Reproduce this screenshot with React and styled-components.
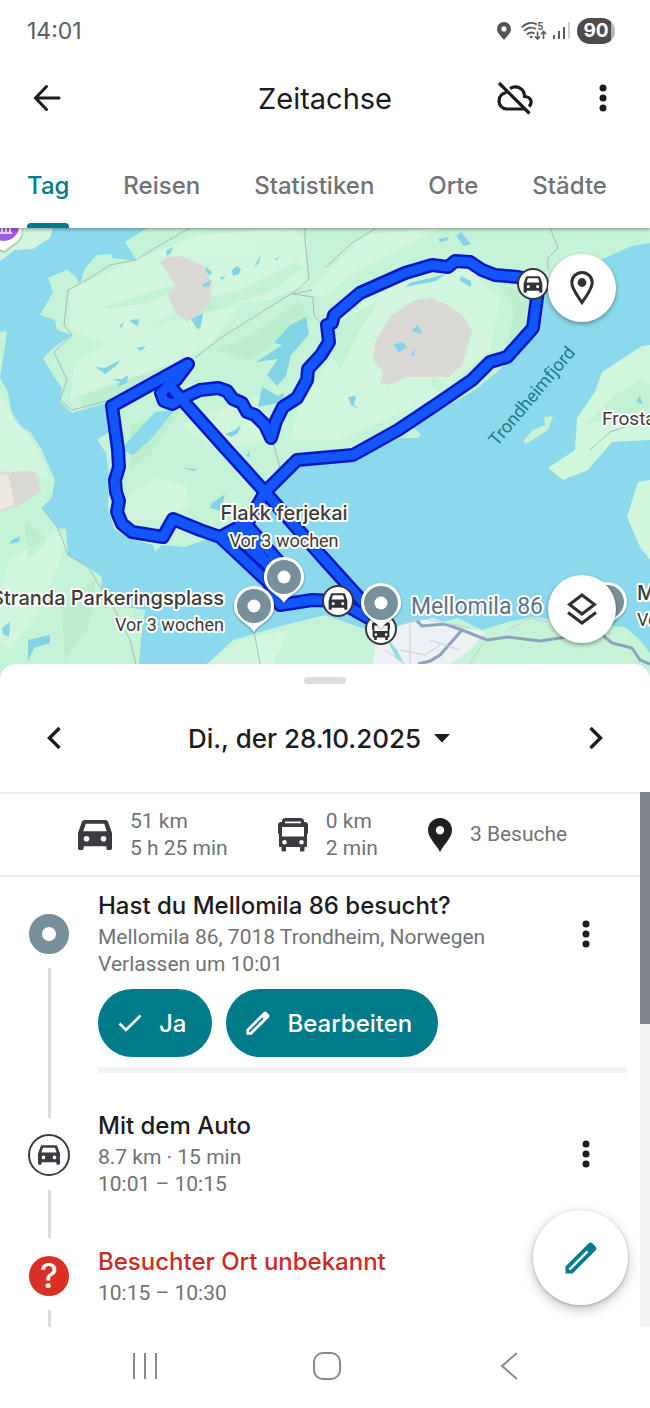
import styled, { createGlobalStyle } from 'styled-components'

const TEAL = '#007b8a'
const INK = '#1c1c1f'
const GREY = '#6f7377'
const TITLE_FONT = `Inter, 'Google Sans', sans-serif`

export default function App() {
  return (
    <>
      <GlobalStyle />
      <Screen>
        <TopArea>
          <StatusBar>
            <Clock>14:01</Clock>
            <StatusIcons>
              <LocationIcon />
              <WifiIcon />
              <SignalIcon />
              <Battery>90</Battery>
            </StatusIcons>
          </StatusBar>

          <AppBar>
            <IconButton aria-label="Zurück">
              <svg width="28" height="28" viewBox="0 0 28 28" fill="none" stroke={INK} strokeWidth="3" strokeLinecap="round">
                <path d="M26 14H3M13.500 2.500L2.500 14L13.500 25.500" />
              </svg>
            </IconButton>
            <PageTitle>Zeitachse</PageTitle>
            <BarActions>
              <IconButton aria-label="Sicherung aus">
                <CloudOffIcon />
              </IconButton>
              <IconButton aria-label="Mehr">
                <DotsIcon />
              </IconButton>
            </BarActions>
          </AppBar>

          <Tabs>
            {TABS.map((tab, i) => (
              <Tab key={tab} href="#" $active={i === 0}>
                {tab}
              </Tab>
            ))}
          </Tabs>
        </TopArea>

        <MapArea>
          <TimelineMap />
          <MapButton $top aria-label="Orte anzeigen">
            <svg width="26" height="36" viewBox="0 0 26 36" fill="none">
              <path
                d="M13 32.500C9 26 2.800 19.500 2.800 12.600a10.200 10.200 0 0 1 20.400 0C23.200 19.500 17 26 13 32.500z"
                stroke="#2f3034"
                strokeWidth="3"
              />
              <circle cx="13" cy="12.500" r="4.400" fill="#2f3034" />
            </svg>
          </MapButton>
          <MapButton aria-label="Ebenen">
            <svg width="32" height="34" viewBox="0 0 32 34" fill="none" stroke="#2f3034" strokeWidth="3">
              <path d="M16 3L28.500 12.500L16 22L3.500 12.500z" />
              <path d="M2 20.500L16 31L30 20.500" />
            </svg>
          </MapButton>
        </MapArea>

        <Sheet>
          <Handle />
          <DateRow>
            <IconButton aria-label="Vorheriger Tag">
              <svg width="16" height="24" viewBox="0 0 16 24" fill="none" stroke={INK} strokeWidth="3.400">
                <path d="M13.500 2L3.500 12L13.500 22" />
              </svg>
            </IconButton>
            <DateButton>
              Di., der 28.10.2025
              <svg width="16" height="9" viewBox="0 0 16 9">
                <path d="M0 0h16L8 8.500z" fill={INK} />
              </svg>
            </DateButton>
            <IconButton aria-label="Nächster Tag">
              <svg width="16" height="24" viewBox="0 0 16 24" fill="none" stroke={INK} strokeWidth="3.400">
                <path d="M2.500 2L12.500 12L2.500 22" />
              </svg>
            </IconButton>
          </DateRow>

          <SheetBody>
            <Content>
              <Stats>
                <Stat>
                  <CarIcon size={34} />
                  <StatText>
                    51 km
                    <br />5 h 25 min
                  </StatText>
                </Stat>
                <Stat>
                  <BusIcon />
                  <StatText>
                    0 km
                    <br />2 min
                  </StatText>
                </Stat>
                <Stat>
                  <svg width="24" height="34" viewBox="0 0 24 34">
                    <path
                      fillRule="evenodd"
                      d="M12 0a12 12 0 0 1 12 12C24 20 16 26 12 34C8 26 0 20 0 12A12 12 0 0 1 12 0zM12 8a4.200 4.200 0 1 0 0 8.400a4.200 4.200 0 0 0 0-8.400z"
                      fill="#1f1f22"
                    />
                  </svg>
                  <StatText>3 Besuche</StatText>
                </Stat>
              </Stats>

              <Timeline>
                <Entry>
                  <Rail>
                    <PlaceDot />
                    <RailLine />
                  </Rail>
                  <EntryBody>
                    <EntryHead>
                      <EntryText>
                        <EntryTitle>Hast du Mellomila 86 besucht?</EntryTitle>
                        <EntryInfo>Mellomila 86, 7018 Trondheim, Norwegen</EntryInfo>
                        <EntryInfo>Verlassen um 10:01</EntryInfo>
                      </EntryText>
                      <IconButton aria-label="Optionen">
                        <DotsIcon />
                      </IconButton>
                    </EntryHead>
                    <Actions>
                      <PillButton>
                        <svg width="24" height="20" viewBox="0 0 24 20" fill="none" stroke="#fff" strokeWidth="2.600">
                          <path d="M1.500 10.500L8 17L22.500 2.500" />
                        </svg>
                        Ja
                      </PillButton>
                      <PillButton>
                        <PencilIcon size={24} color="#fff" />
                        Bearbeiten
                      </PillButton>
                    </Actions>
                    <EntryDivider />
                  </EntryBody>
                </Entry>

                <Entry>
                  <Rail>
                    <RideDot>
                      <CarIcon size={22} />
                    </RideDot>
                    <RailLine $short />
                  </Rail>
                  <EntryBody>
                    <EntryHead $spaced>
                      <EntryText>
                        <EntryTitle>Mit dem Auto</EntryTitle>
                        <EntryInfo>8.7 km · 15 min</EntryInfo>
                        <EntryInfo>10:01 – 10:15</EntryInfo>
                      </EntryText>
                      <IconButton aria-label="Optionen">
                        <DotsIcon />
                      </IconButton>
                    </EntryHead>
                  </EntryBody>
                </Entry>

                <Entry $last>
                  <Rail $compact>
                    <UnknownDot>?</UnknownDot>
                    <RailLine $last />
                  </Rail>
                  <EntryBody>
                    <EntryText>
                      <EntryTitle $warn>Besuchter Ort unbekannt</EntryTitle>
                      <EntryInfo>10:15 – 10:30</EntryInfo>
                    </EntryText>
                  </EntryBody>
                </Entry>
              </Timeline>
            </Content>

            <ScrollTrack>
              <ScrollThumb />
            </ScrollTrack>

            <EditButton aria-label="Tag bearbeiten">
              <PencilIcon size={32} color={TEAL} />
            </EditButton>
          </SheetBody>
        </Sheet>

        <SystemNav>
          <SystemButton aria-label="Letzte Apps">
            <svg width="26" height="26" viewBox="0 0 26 26" stroke="#8a8a8a" strokeWidth="2">
              <path d="M2 0v26M13 0v26M24 0v26" />
            </svg>
          </SystemButton>
          <SystemButton aria-label="Startbildschirm">
            <svg width="28" height="28" viewBox="0 0 28 28" fill="none" stroke="#8a8a8a" strokeWidth="2">
              <rect x="1" y="1" width="26" height="26" rx="9" />
            </svg>
          </SystemButton>
          <SystemButton aria-label="Zurück">
            <svg width="18" height="28" viewBox="0 0 18 28" fill="none" stroke="#8a8a8a" strokeWidth="2">
              <path d="M17 1L2 14L17 27" />
            </svg>
          </SystemButton>
        </SystemNav>
      </Screen>
    </>
  )
}

const TABS = ['Tag', 'Reisen', 'Statistiken', 'Orte', 'Städte']

/* icons */

const CAR_PATH =
  'M18.92 6.01C18.72 5.42 18.16 5 17.5 5h-11c-.66 0-1.21.42-1.42 1.01L3 12v8c0 .55.45 1 1 1h1c.55 0 1-.45 1-1v-1h12v1c0 .55.45 1 1 1h1c.55 0 1-.45 1-1v-8l-2.08-5.99zM7.500 16.500a1.500 1.500 0 1 1 0-3a1.500 1.500 0 0 1 0 3zm9 0a1.500 1.500 0 1 1 0-3a1.500 1.500 0 0 1 0 3zM5.800 11l1.300-4h9.800l1.300 4z'

const BUS_PATH =
  'M4 3Q4 0 8 0h14q4 0 4 3v1h1q3 0 3 3v8q0 1-1 1v12q0 1-1 1h-1.500v3.500q0 1-1 1h-2.500q-1 0-1-1V29H8v3.500q0 1-1 1H4.500q-1 0-1-1V29H2q-1 0-1-1V16q-1 0-1-1V7q0-3 3-3h1zM7 3.500v1.700h16V3.500zM4 9v9.500h22V9zM6.500 22a2.300 2.300 0 1 0 0 4.600a2.300 2.300 0 0 0 0-4.600zM23.500 22a2.300 2.300 0 1 0 0 4.600a2.300 2.300 0 0 0 0-4.600z'

const CarIcon = ({ size }) => (
  <svg width={size} height={size} viewBox="3 4 18 18" fill="#3a3c42">
    <path fillRule="evenodd" d={CAR_PATH} />
  </svg>
)

const BusIcon = () => (
  <svg width="30" height="34" viewBox="0 0 30 34" fill="#3a3c42">
    <path fillRule="evenodd" d={BUS_PATH} />
  </svg>
)

const DotsIcon = () => (
  <svg width="8" height="28" viewBox="0 0 8 28" fill={INK}>
    <circle cx="4" cy="4" r="3.500" />
    <circle cx="4" cy="14" r="3.500" />
    <circle cx="4" cy="24" r="3.500" />
  </svg>
)

const PencilIcon = ({ size, color }) => (
  <svg width={size} height={size} viewBox="0 0 32 32">
    <path
      fillRule="evenodd"
      fill={color}
      d="M0.500 31.500V24.500L23.500 1.500Q25.500-.3 27.500 1.500L30.500 4.500Q32.300 6.500 30.500 8.500L7.500 31.500zM4 26.300V28H5.700L23.500 10.300L21.700 8.500z"
    />
  </svg>
)

const CloudOffIcon = () => (
  <svg width="38" height="38" viewBox="0 0 38 38" fill="none" stroke={INK} strokeWidth="3.200">
    <path d="M3 4L33.500 34.500" />
    <path d="M10.500 13.500C5.500 14.500 3 18 3 22C3 26.500 6.500 30 10.500 30H28" />
    <path d="M14 9.500C21 5.500 28.500 10 28.500 17.500C36 18 36.500 24.500 33 27.500" />
  </svg>
)

const LocationIcon = () => (
  <svg width="22" height="18" viewBox="-4 0 22 18" fill="#555">
    <path fillRule="evenodd" d="M7 0a7 7 0 0 1 7 7c0 4-4 7-7 11C4 14 0 11 0 7a7 7 0 0 1 7-7zM7 4.300a2.600 2.600 0 1 0 0 5.200a2.600 2.600 0 0 0 0-5.200z" />
  </svg>
)

const WifiIcon = () => (
  <svg width="26" height="20" viewBox="0 0 26 20" fill="none" stroke="#5c5c5c" strokeWidth="1.800">
    <path d="M1 6.500C5 1.500 11.500.500 16 3.500M3 10C6 6.500 11 5.500 15 8M6 13.500C8 11.500 11 11 13.500 12.500" />
    <circle cx="10.200" cy="16" r="1.300" fill="#5c5c5c" stroke="none" />
    <path d="M16.500 10.500v7.500M14 15.500l2.500 2.500l2.500-2.500M22.500 18v-7.500M20 13l2.500-2.500L25 13" strokeWidth="1.600" />
    <text x="16.500" y="8.500" fontSize="10" fontWeight="700" fontFamily="Roboto, sans-serif" fill="#5c5c5c" stroke="none">
      5
    </text>
  </svg>
)

const SignalIcon = () => (
  <svg width="18" height="18" viewBox="0 0 18 18" fill="#5c5c5c">
    <rect x="0" y="13" width="2" height="4" />
    <rect x="5" y="9" width="2" height="8" />
    <rect x="10" y="5" width="2" height="12" />
    <rect x="15" y="0" width="2" height="17" fill="#cfcfcf" />
  </svg>
)

/* map */

const ROUTES = [
  'M533 280L518 277L495 275L482 270L470 262L455 261L448 267L432 265L405 273L360 293L334 315L332 323L327 325L329 342L321 355L308 369L307 380L297 398L283 407L276 421L271 438L265 425L255 415L247 412L242 403L233 399L227 391L218 388L200 390L185 397L172 404L164 401L161 393L168 386L176 380L188 364L112 406L118 450L119 467L115 480L116 492L119 501L117 512L122 524L132 532L163 537L173 519L200 530L220 537L268 582L280 605L312 600L338 601L381 625',
  'M168 384L227 450L265 492L325 560L372 612',
  'M538 290L533 328L507 357L490 362L472 380L440 402L398 430L353 455L297 460L265 492L248 522L222 536',
  'M246 524L286 570',
  'M232 532L262 560L282 566',
  'M240 524L272 572',
]

const LAKES = [
  '166,251 173,247 171,253 167,256',
  '205,266 212,272 210,276 206,272',
  '220,277 226,276 222,280',
  '232,270 237,266 241,269 239,274 233,276',
  '254,267 261,254 259,263',
  '274,260 280,256 277,260',
  '203,284 212,280 208,287 203,287',
  '130,320 139,319 138,326 132,323',
  '120,325 124,322 121,329',
  '191,319 203,313 201,326 198,330',
  '136,348 146,346 141,351',
  '95,367 105,368 120,360 116,366 105,374',
  '112,379 122,379 128,375 127,383 117,387 120,382',
  '274,343 289,326 306,317 309,334 300,345 291,355 286,376 277,386 267,375 278,359 256,362 282,345',
  '262,387 278,396 284,393 282,402 258,407',
  '225,434 235,430 241,425 238,433 231,437',
  '438,239 449,237 446,241 440,242',
  '456,236 461,232 471,244 464,246',
  '461,276 471,281 471,287 460,281',
  '410,283 446,274 436,281 405,287',
  '411,331 418,325 422,334',
  '393,345 402,342 407,347 399,352',
  '411,355 415,348 414,356',
  '348,397 356,396 354,405 359,409 351,405',
  '183,468 197,469 194,471',
  '212,503 225,494 221,511 210,508',
  '636,402 640,396 643,404',
  '12,540 20,536 19,542 9,544',
  '2,628 10,622 9,637 3,634',
  '28,640 50,635 50,643 34,648 28,661',
  '246,456 250,450 249,457',
]

const Pin = ({ x, y }) => (
  <g transform={`translate(${x} ${y})`} filter="url(#pinShadow)">
    <path d="M0 26C-4 18-20 14-20 0A20 20 0 0 1 20 0C20 14 4 18 0 26z" fill="#fff" />
    <circle r="17" fill="#78909c" />
    <circle r="6.500" fill="#fff" />
  </g>
)

const RideMarker = ({ x, y, bus }) => (
  <g transform={`translate(${x} ${y})`}>
    <circle r="15" fill="#fff" stroke="#35373b" strokeWidth="2" />
    <path
      fill="#303338"
      fillRule="evenodd"
      transform={bus ? 'translate(-9 -9) scale(.6)' : 'translate(-12.5 -13) scale(1.04)'}
      d={bus ? BUS_PATH : CAR_PATH}
    />
  </g>
)

const TimelineMap = () => (
  <MapSvg viewBox="0 228 650 450" role="img" aria-label="Karte">
    <defs>
      <filter id="pinShadow" x="-30%" y="-30%" width="160%" height="160%">
        <feDropShadow dx="0" dy="1" stdDeviation="1" floodColor="#000" floodOpacity=".45" />
      </filter>
    </defs>
    <rect x="0" y="228" width="650" height="450" fill="#8bd9ec" />

    {/* land */}
    <g fill="#c5f3d7">
      <path d="M0 228H53L50 238L33 249L15 250L0 261z" fill="#d2f5dd" />
      <path d="M147 228L125 242L137 261L112 258V254L97 255L85 268L80 284L75 276L67 270L48 278L53 292L40 315L55 320L57 330L72 335L53 348L43 358L53 375L62 388L60 402L72 413L110 402L112 430L97 440L106 453L109 475L108 510L115 530L135 540L153 545L155 552L162 545L185 547L205 540L230 535L255 508L275 482L300 466L350 460L400 438L418 438L421 434L412 427L475 390L505 365L540 332L545 290L560 270L600 260L632 246L650 243V228z" />
      <path d="M0 332L7 331L3 360L0 378L8 392L13 422L30 432L42 450L55 480L52 497L42 508L58 528L66 529L68 555L88 567L102 577L101 590L112 605L145 610L141 640L138 678H0z" />
      <path d="M200 678L207 664L233 640L277 627L325 615L362 628L400 632L458 618L482 630L508 622L532 617L560 620L600 625L625 627L640 640L650 653V678z" />
      <path d="M650 345L642 346L602 372L595 392L577 418L575 450L548 468L563 480L588 470L612 442L650 440z" fill="#d0f6dc" />
      <path d="M650 480L638 482L627 517L640 547L650 560z" fill="#d0f6dc" />
      <path d="M523 441L533 430L545 425L544 417L553 416L548 430L537 437L526 444z" fill="#c8f4d4" />
    </g>

    {/* terrain */}
    <g fill="#d5f8e0" opacity=".75">
      <path d="M70 290L130 262L200 235L290 228L308 240L305 285L270 300L180 310L110 345L70 330z" />
      <path d="M75 362L130 330L240 305L210 345L150 372L70 400z" />
      <path d="M340 320L400 275L470 268L500 300L490 350L430 400L340 440L290 440L300 405L330 360z" />
      <path d="M125 500L155 478L185 485L190 505L160 520L128 520z" />
      <path d="M365 235L430 228H440L350 275L320 300L310 290z" />
      <path d="M10 560L60 530L66 545L40 610L10 650L0 640V590z" />
      <path d="M0 395L20 425L38 450L50 480L30 475L0 470z" />
      <path d="M180 425L260 395L268 440L220 450z" />
      <path d="M205 665L240 640L290 630L270 668z" />
    </g>
    <g fill="#aeeac6" opacity=".4">
      <path d="M190 303L240 290L296 262L304 268L270 292L205 312z" />
      <path d="M95 310L150 292L190 280L150 303z" />
      <path d="M322 340L350 315L380 300L360 330L340 370z" />
      <path d="M500 285L540 295L532 325L505 350L515 310z" />
      <path d="M431 372L445 385L440 393L432 388z" />
      <path d="M215 350L250 335L300 300L312 320L250 360z" />
      <path d="M130 425L180 410L170 425L150 455L130 470z" />
      <path d="M80 395L170 365L165 378L85 410z" />
      <path d="M25 520L48 540L28 560z" />
      <path d="M60 600L95 580L90 625L65 660z" />
      <path d="M585 425L615 395L640 380L650 385V420L610 418z" />
    </g>
    <g fill="#dad9d6">
      <path d="M160 262L167 257L180 256L203 265L212 285L210 302L200 313L187 322L175 312L167 293L177 287z" />
      <path d="M432 298L448 305L465 318L472 332L462 365L448 377L408 377L388 385L380 383L383 372L373 360L375 342L392 315L415 300z" />
      <path d="M0 472L35 471L41 490L20 506L0 512z" />
    </g>
    <path d="M0 475L8 474L15 505L0 510z" fill="#ece7df" />
    <path d="M370 678L376 645L400 625L432 618L462 628L485 632L470 650L450 664L440 678z" fill="#eef1f3" />
    <path d="M120 450L155 412L175 410L150 440L133 455z" fill="#8bd9ec" />

    <g fill="#83d3e6">
      {LAKES.map((points) => (
        <polygon key={points} points={points} />
      ))}
    </g>

    {/* roads */}
    <g fill="none" stroke="#a9bdb8" strokeWidth="1">
      <path d="M190 228L155 248L136 260L110 265L90 278L68 290L64 325L72 335L54 352L67 380L60 400L72 410L110 400M195 358L222 337L265 310L297 290L309 279L305 240V228M312 290L293 294L313 297L314 315L322 325" />
      <path d="M376 228L352 243L325 268M550 228L558 248L548 258V270" />
      <path d="M42 508L58 528L68 555L88 567L102 590L112 605L130 640L136 664M252 620L260 664M590 450L610 432L650 418M273 442L280 468" />
    </g>
    <g fill="none" stroke="#8da2bd" strokeWidth="3">
      <path d="M417 621L422 626L445 624L462 630L487 640L508 637L540 641L560 638L600 633L612 643L632 648L640 660L650 664" />
      <path d="M462 630L440 655L430 661L418 664" />
    </g>
    <g fill="none" stroke="#c6cbe2" strokeWidth="1">
      <path d="M400 625L420 618L470 628M485 640L470 664M400 650L425 655L440 645M410 625V664M505 632L530 618L548 622M430 640L460 650M385 650L405 664" />
    </g>
    <path d="M385 635L397 650L404 664L396 658z" fill="#97dcdd" />

    {/* tracked route */}
    <g fill="none" strokeLinejoin="round" strokeLinecap="round">
      {ROUTES.map((d) => (
        <path key={d} d={d} stroke="#0418c4" strokeWidth="14" />
      ))}
      {ROUTES.map((d) => (
        <path key={d} d={d} stroke="#1155fb" strokeWidth="9" />
      ))}
    </g>

    {/* place category pin */}
    <g filter="url(#pinShadow)">
      <path d="M-14 228H22Q22 240 12 245L4 251L-8 246z" fill="#fff" />
      <circle cx="4" cy="226" r="15" fill="#a259e8" />
      <path d="M-2 233H12M2 228V232M6 228V232M10 228V232" stroke="#fff" strokeWidth="1.500" />
    </g>

    <WaterLabel transform="translate(497 447) rotate(-50)">Trondheimfjord</WaterLabel>
    <TownLabel x="602" y="425">Frosta</TownLabel>

    <RideMarker x={533} y={284} />
    <RideMarker x={338} y={601} />
    <RideMarker x={381} y={629} bus />
    <Pin x={607} y={602} />
    <Pin x={284} y={577} />
    <Pin x={254} y={606} />
    <Pin x={381} y={603} />

    <PlaceLabel x="284" y="520" textAnchor="middle">Flakk ferjekai</PlaceLabel>
    <MapLabel x="284" y="547" textAnchor="middle">Vor 3 wochen</MapLabel>
    <PlaceLabel x="224" y="605" textAnchor="end">Stranda Parkeringsplass</PlaceLabel>
    <MapLabel x="224" y="631" textAnchor="end">Vor 3 wochen</MapLabel>
    <HomeLabel x="411" y="614">Mellomila 86</HomeLabel>
    <PlaceLabel x="637" y="600">Mellomila</PlaceLabel>
    <MapLabel x="637" y="626">Vor 3 wochen</MapLabel>
  </MapSvg>
)

/* styles */

const GlobalStyle = createGlobalStyle`
  * {
    box-sizing: border-box;
  }

  body {
    margin: 0;
    background: #fff;
    font-family: Roboto, sans-serif;
    color: ${INK};
  }

  svg {
    flex-shrink: 0;
  }
`

const Screen = styled.div`
  display: flex;
  flex-direction: column;
  min-height: 100vh;
  overflow: hidden;
`

const TopArea = styled.header`
  position: relative;
  z-index: 1;
  background: #fff;
  box-shadow: 0 1px 4px rgba(0, 0, 0, 0.4);
`

const StatusBar = styled.div`
  display: flex;
  align-items: center;
  justify-content: space-between;
  height: 62px;
  padding: 0 35px 0 27px;
`

const Clock = styled.span`
  font-family: ${TITLE_FONT};
  font-size: 23px;
  color: #5e5e5e;
`

const StatusIcons = styled.div`
  display: flex;
  align-items: center;
  gap: 6px;
`

const Battery = styled.span`
  width: 38px;
  border-radius: 13px;
  background: linear-gradient(90deg, #4c4c4c 90%, #b5b5b5 90%);
  font-family: ${TITLE_FONT};
  font-size: 19px;
  font-weight: 700;
  line-height: 26px;
  text-align: center;
  color: #fff;
`

const AppBar = styled.div`
  display: grid;
  grid-template-columns: 1fr auto 1fr;
  align-items: center;
  height: 72px;
  padding: 0 23px;
`

const BaseButton = styled.button`
  display: flex;
  align-items: center;
  justify-content: center;
  border: 0;
  padding: 0;
  background: none;
  color: ${INK};
  cursor: pointer;
`

const IconButton = styled(BaseButton)`
  width: 48px;
  height: 48px;
`

const PageTitle = styled.h1`
  margin: 0;
  font-family: ${TITLE_FONT};
  font-size: 29px;
  font-weight: 400;
`

const BarActions = styled.div`
  display: flex;
  justify-content: flex-end;
  gap: 40px;
`

const Tabs = styled.nav`
  display: flex;
  justify-content: space-between;
  padding: 0 43px 0 27px;
`

const Tab = styled.a`
  position: relative;
  padding: 36px 0 26px;
  font-family: ${TITLE_FONT};
  font-size: 24px;
  font-weight: 500;
  line-height: 32px;
  text-decoration: none;
  color: ${({ $active }) => ($active ? TEAL : GREY)};

  &::after {
    content: '';
    position: absolute;
    left: 0;
    right: 0;
    bottom: 0;
    height: 5px;
    border-radius: 4px 4px 0 0;
    background: ${({ $active }) => ($active ? TEAL : 'transparent')};
  }
`

const MapArea = styled.div`
  position: relative;
`

const MapSvg = styled.svg`
  display: block;
  width: 100%;
  height: auto;
`

const MapLabel = styled.text`
  font-family: Roboto, sans-serif;
  font-size: 18px;
  fill: #3f3c3c;
  stroke: #fff;
  stroke-width: 4px;
  stroke-linejoin: round;
  paint-order: stroke;
`

const TownLabel = styled(MapLabel)`
  font-size: 19px;
`

const PlaceLabel = styled(MapLabel)`
  font-family: ${TITLE_FONT};
  font-size: 20px;
  font-weight: 500;
`

const HomeLabel = styled(MapLabel)`
  font-size: 23px;
  fill: #5c7483;
`

const WaterLabel = styled.text`
  font-family: Roboto, sans-serif;
  font-size: 18px;
  fill: #1a7c8f;
`

const MapButton = styled(BaseButton)`
  position: absolute;
  right: 34px;
  ${({ $top }) => ($top ? 'top: 26px;' : 'bottom: 35px;')}
  width: 68px;
  height: 68px;
  border-radius: 50%;
  background: #fff;
  box-shadow: 0 2px 4px rgba(0, 0, 0, 0.35);
`

const Sheet = styled.main`
  position: relative;
  display: flex;
  flex: 1;
  flex-direction: column;
  margin-top: -14px;
  border-radius: 16px 16px 0 0;
  background: #fff;
`

const Handle = styled.div`
  width: 42px;
  height: 7px;
  margin: 13px auto 0;
  border-radius: 3px;
  background: #dadce0;
`

const DateRow = styled.div`
  display: flex;
  align-items: center;
  justify-content: space-between;
  height: 108px;
  padding: 0 30px;
`

const DateButton = styled(BaseButton)`
  gap: 13px;
  padding-right: 12px;
  font-family: ${TITLE_FONT};
  font-size: 26px;
  font-weight: 500;
`

const SheetBody = styled.div`
  position: relative;
  display: flex;
  flex: 1;
`

const Content = styled.div`
  display: flex;
  flex: 1;
  flex-direction: column;
  min-width: 0;
  border-top: 2px solid #ebecee;
`

const Stats = styled.div`
  display: flex;
  align-items: center;
  gap: 50px;
  height: 83px;
  padding-left: 78px;
  border-bottom: 2px solid #ebecee;
`

const Stat = styled.div`
  display: flex;
  align-items: center;
  gap: 18px;
`

const StatText = styled.div`
  font-size: 21px;
  line-height: 27px;
  white-space: nowrap;
  color: ${GREY};
`

const Timeline = styled.div`
  display: flex;
  flex: 1;
  flex-direction: column;
  padding-top: 13px;
`

const Entry = styled.article`
  display: flex;
  ${({ $last }) => $last && 'flex: 1;'}
`

const Rail = styled.div`
  display: flex;
  flex-direction: column;
  align-items: center;
  width: 98px;
  padding-top: ${({ $compact }) => ($compact ? 10 : 24)}px;
`

const RailLine = styled.div`
  flex: 1;
  width: 3px;
  margin: 14px 0 ${({ $short, $last }) => ($last ? 0 : $short ? 8 : -8)}px;
  background: #dadce0;
`

const PlaceDot = styled.div`
  width: 40px;
  height: 40px;
  border: 13px solid #78909c;
  border-radius: 50%;
`

const RideDot = styled.div`
  display: flex;
  align-items: center;
  justify-content: center;
  width: 42px;
  height: 42px;
  border: 2px solid #3a3c42;
  border-radius: 50%;
`

const UnknownDot = styled.div`
  width: 40px;
  height: 40px;
  border-radius: 50%;
  background: #d93025;
  font-family: ${TITLE_FONT};
  font-size: 34px;
  font-weight: 500;
  line-height: 40px;
  text-align: center;
  color: #fff;
`

const EntryBody = styled.div`
  flex: 1;
  padding-right: 13px;
`

const EntryHead = styled.div`
  display: flex;
  align-items: center;
  justify-content: space-between;
  margin-bottom: ${({ $spaced }) => ($spaced ? 48 : 11)}px;
  padding-right: 17px;
`

const EntryText = styled.div`
  flex: 1;
`

const EntryTitle = styled.h2`
  margin: 0 0 2px;
  font-family: ${TITLE_FONT};
  font-size: 24px;
  font-weight: 500;
  line-height: 32px;
  color: ${({ $warn }) => ($warn ? '#cc2b25' : INK)};
`

const EntryInfo = styled.p`
  margin: 0;
  font-size: 21px;
  line-height: 27px;
  color: ${GREY};
`

const Actions = styled.div`
  display: flex;
  gap: 14px;
`

const PillButton = styled(BaseButton)`
  gap: 17px;
  height: 68px;
  padding: 0 26px 0 20px;
  border-radius: 34px;
  background: ${TEAL};
  font-family: ${TITLE_FONT};
  font-size: 24px;
  font-weight: 500;
  color: #fff;
`

const EntryDivider = styled.div`
  height: 6px;
  margin: 10px 0 37px;
  background: #f3f4f5;
`

const ScrollTrack = styled.div`
  flex-shrink: 0;
  width: 10px;
  background: #f1f3f4;
`

const ScrollThumb = styled.div`
  height: 232px;
  background: #80868b;
`

const EditButton = styled(BaseButton)`
  position: absolute;
  right: 22px;
  bottom: 22px;
  width: 95px;
  height: 95px;
  border-radius: 50%;
  background: #fff;
  box-shadow: 0 4px 12px rgba(0, 0, 0, 0.25), 0 1px 3px rgba(0, 0, 0, 0.2);
`

const SystemNav = styled.nav`
  display: grid;
  grid-template-columns: repeat(3, 1fr);
  height: 81px;
  padding: 0 50px 4px 54px;
  background: #fff;
`

const SystemButton = styled(BaseButton)`
  height: 100%;
`
